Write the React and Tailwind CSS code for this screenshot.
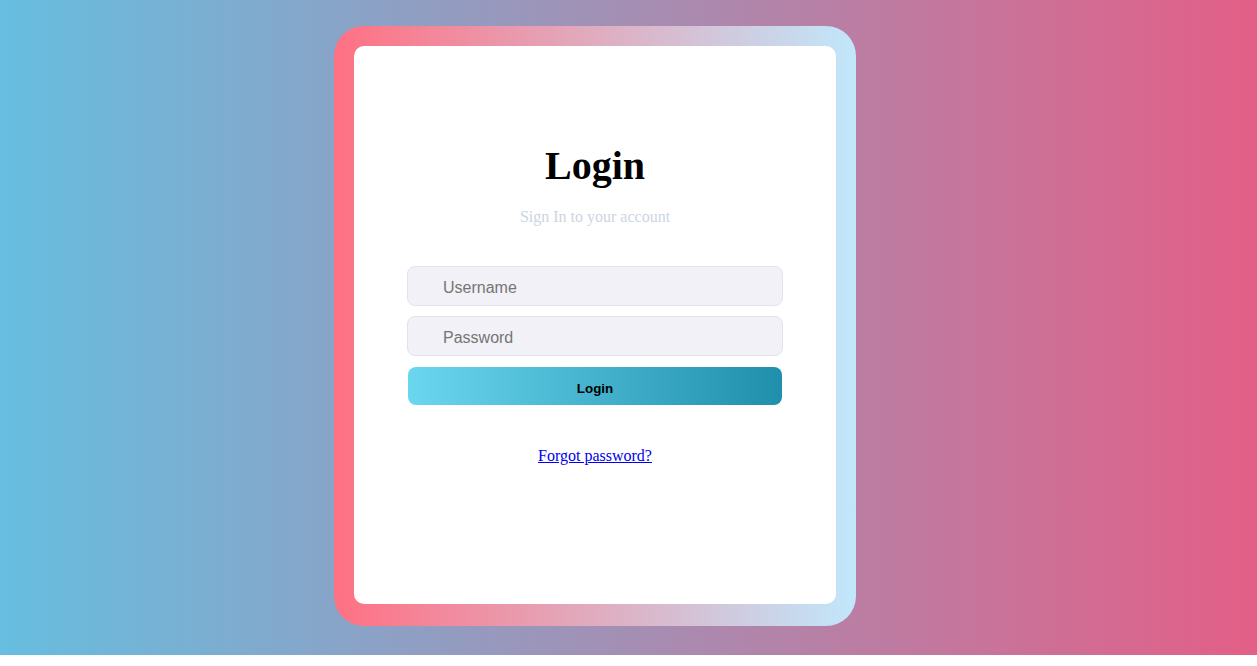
export default function App() {
  return (
    <div className="w-full h-[655px] bg-linear-to-r/srgb from-[#66bee0] to-[#e35f87] flex justify-center pt-[26px] pr-[67px]">
      <div className="w-[522px] h-[600px] rounded-[30px] bg-linear-to-r/srgb from-[#ff7083] to-[#c1e7fb] pt-5 px-5 pb-[22px]">
        <div className="h-full bg-white rounded-[10px] flex flex-col items-center pt-[100px] font-['Liberation_Serif',serif]">
          <h1 className="text-[40px] leading-[40px] font-bold text-black">Login</h1>
          <p className="mt-[22px] text-[16px] leading-[18px] text-[#cbd5e1]">Sign In to your account</p>

          <form className="mt-[40px] flex flex-col items-center font-['Liberation_Sans',Arial,sans-serif]" onSubmit={e => e.preventDefault()}>
            <input
              type="text"
              placeholder="Username"
              className="w-[376px] h-[40px] rounded-lg border border-[#e4e2ec] bg-[#f2f1f7] pl-[35px] pt-[4px] text-[16px] text-black placeholder:text-[#757575] outline-none"
            />
            <input
              type="password"
              placeholder="Password"
              className="mt-[10px] w-[376px] h-[40px] rounded-lg border border-[#e4e2ec] bg-[#f2f1f7] pl-[35px] pt-[4px] text-[16px] text-black placeholder:text-[#757575] outline-none"
            />
            <button
              type="submit"
              className="mt-[11px] w-[374px] h-[38px] rounded-lg bg-linear-to-r/srgb from-[#6bd6ef] to-[#1f8fac] pt-[6px] text-[13.333px] font-bold text-black"
            >
              Login
            </button>
          </form>

          <a href="#" className="mt-[42px] text-[16px] leading-[18px] text-[#0000ee] underline">
            Forgot password?
          </a>
        </div>
      </div>
    </div>
  );
}
